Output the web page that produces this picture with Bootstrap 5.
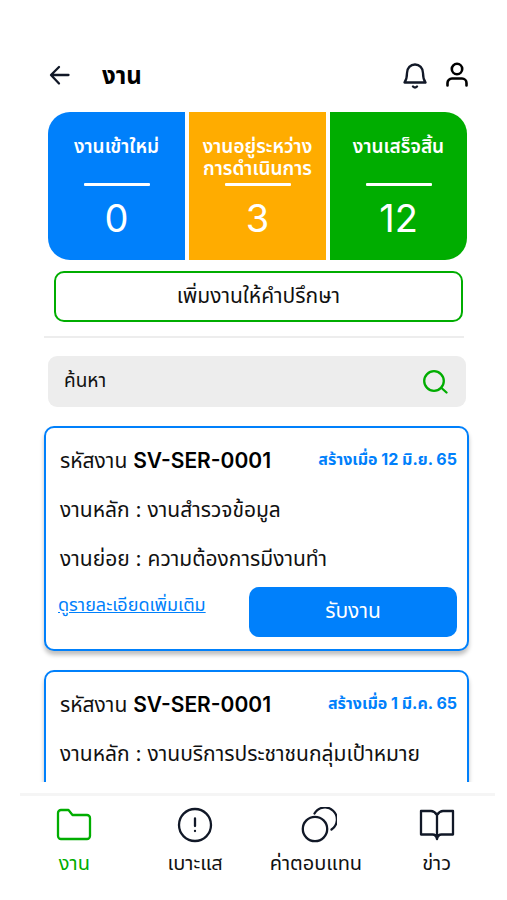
<!DOCTYPE html>
<html lang="th">
<head>
<meta charset="utf-8">
<meta name="viewport" content="width=device-width, initial-scale=1">
<title>งาน</title>
<link href="https://cdn.jsdelivr.net/npm/bootstrap@5.3.0/dist/css/bootstrap.min.css" rel="stylesheet">
<style>
:root{--app-blue:#0080fb;--app-green:#00ad00;--app-amber:#ffac00;--ink:#111827}
body{font-family:Inter,"Noto Sans Thai","Noto Sans",sans-serif;font-size:21px;line-height:28px;color:#111;background:#fff}
svg{display:block;fill:none;stroke:currentColor;stroke-width:2.3;stroke-linecap:round;stroke-linejoin:round}
.app-header{padding:56px 36px 16px 46px;min-height:112px}
.app-header h1{font-size:24px;line-height:40px;font-weight:700;color:#000}
.icon-btn{background:none;border:0;padding:0;color:var(--ink)}
.icon-btn.find{color:var(--app-green)}
.jobs{padding:0 38px 0 44px}
.tiles{gap:4px;margin:0 2px 0 4px;border-radius:22px;overflow:hidden}
.tile{flex:1 1 0;min-height:148px;padding-top:24px;color:#fff}
.tile-new{background:var(--app-blue)}
.tile-doing{background:var(--app-amber)}
.tile-done{background:var(--app-green)}
.tile-label{font-size:19px;line-height:22px;min-height:47px;font-weight:600;white-space:nowrap}
.tile-rule{width:66px;height:3px;border-radius:1px;background:#fff}
.tile-number{font-size:38px;line-height:44px;margin-top:10px}
.btn-add{height:51px;margin:11px 6px 0 10px;padding:0 0 2px;font-size:21px;border:2px solid var(--app-green);border-radius:10px;background:#fff;color:#111}
.split{height:2px;background:#ededed;margin:14px 5px 18px 0}
.search{height:51px;margin:0 3px 19px 4px;padding:0 18px 0 16px;border-radius:9px;background:#ededed}
.search input{font-size:19px;line-height:28px;margin-bottom:2px;background:transparent;border:0;outline:0;min-width:0;color:#111}
.search input::placeholder{color:#111;opacity:1}
.job{min-height:225px;margin-bottom:19px;padding:19px 10px 12px 14px;border:2px solid var(--app-blue);border-radius:10px;background:#fff;box-shadow:0 4px 4px rgba(0,0,0,.25)}
.job-line{margin-bottom:21px}
.job-code{font-weight:600;color:#000}
.job-date{font-size:16px;line-height:24px;font-weight:700;color:var(--app-blue)}
.job-actions{margin:14px 0 0 -2px}
.job-more{font-size:18px;line-height:24px;margin-top:6px;color:var(--app-blue)}
.btn-take{width:208px;height:50px;padding:0 0 2px;font-size:21px;border:0;border-radius:10px;background:var(--app-blue);color:#fff}
.tabs-rule{height:3px;margin:11px 12px 0 20px;background:#f5f5f5}
.tabs{padding:11px 10px 23px 14px}
.tabs a{flex:1 1 0;color:#111;font-size:20px;line-height:28px}
.tabs svg{color:var(--ink);margin-bottom:6px}
.tabs a.current,.tabs a.current svg{color:var(--app-green)}
</style>
<script src="https://cdn.jsdelivr.net/npm/bootstrap@5.3.0/dist/js/bootstrap.bundle.min.js" defer></script>
</head>
<body>
<div class="d-flex flex-column vh-100">
  <header class="app-header d-flex align-items-center">
    <button class="icon-btn" type="button" aria-label="ย้อนกลับ"><svg width="28" height="28" viewBox="0 0 28 28"><path d="M22.500 13H5.500M13 5 5 13l8 8.500"/></svg></button>
    <h1 class="mb-0 ms-4 ps-1 me-auto">งาน</h1>
    <button class="icon-btn me-3" type="button" aria-label="การแจ้งเตือน"><svg width="26" height="28" viewBox="0 0 26 28"><path d="M3.500 20.500C6 17 6 15 6 11C6 6 9.500 2.500 14 2.500S22 6 22 11c0 4 0 6 2.500 9.500zM12 24.500c1.300 1.300 2.700 1.300 4 0"/></svg></button>
    <button class="icon-btn text-black" type="button" aria-label="บัญชีผู้ใช้"><svg width="28" height="28" viewBox="0 0 28 28"><g stroke-width="2.600"><circle cx="14" cy="7" r="5.200"/><path d="M4.500 23.500v-2.500a4.500 4.500 0 0 1 4.500-4.500h10a4.500 4.500 0 0 1 4.500 4.500v2.500"/></g></svg></button>
  </header>

  <main class="jobs flex-fill overflow-hidden">
    <section class="tiles d-flex text-center">
      <div class="tile tile-new"><div class="tile-label">งานเข้าใหม่</div><div class="tile-rule mx-auto"></div><div class="tile-number">0</div></div>
      <div class="tile tile-doing"><div class="tile-label">งานอยู่ระหว่าง<br>การดำเนินการ</div><div class="tile-rule mx-auto"></div><div class="tile-number">3</div></div>
      <div class="tile tile-done"><div class="tile-label">งานเสร็จสิ้น</div><div class="tile-rule mx-auto"></div><div class="tile-number">12</div></div>
    </section>
    <div class="d-flex"><button class="btn btn-add flex-fill" type="button">เพิ่มงานให้คำปรึกษา</button></div>
    <div class="split"></div>
    <form class="search d-flex align-items-center" role="search">
      <input class="flex-fill p-0" type="text" placeholder="ค้นหา" aria-label="ค้นหา">
      <button class="icon-btn find" type="button" aria-label="ค้นหางาน"><svg width="26" height="26" viewBox="0 0 26 26"><circle cx="12" cy="12" r="9.800"/><path d="m19.500 19 5 4.500"/></svg></button>
    </form>

    <article class="job">
      <div class="job-line d-flex justify-content-between"><div>รหัสงาน <span class="job-code">SV-SER-0001</span></div><div class="job-date">สร้างเมื่อ 12 มิ.ย. 65</div></div>
      <div class="job-line">งานหลัก : งานสำรวจข้อมูล</div>
      <div>งานย่อย : ความต้องการมีงานทำ</div>
      <div class="job-actions d-flex justify-content-between align-items-start"><a class="job-more" href="#">ดูรายละเอียดเพิ่มเติม</a><button class="btn btn-take" type="button">รับงาน</button></div>
    </article>
    <article class="job">
      <div class="job-line d-flex justify-content-between"><div>รหัสงาน <span class="job-code">SV-SER-0001</span></div><div class="job-date">สร้างเมื่อ 1 มี.ค. 65</div></div>
      <div class="job-line">งานหลัก : งานบริการประชาชนกลุ่มเป้าหมาย</div>
    </article>
  </main>

  <div class="tabs-rule"></div>
  <nav class="tabs d-flex text-center">
    <a class="current text-decoration-none" href="#" aria-current="page"><svg class="mx-auto" width="36" height="36" viewBox="0 0 36 36"><path d="M2 6A3 3 0 0 1 5 3H12.500l4 5h14.500A3 3 0 0 1 34 11v18a3 3 0 0 1-3 3h-26A3 3 0 0 1 2 29z"/></svg>งาน</a>
    <a class="text-decoration-none" href="#"><svg class="mx-auto" width="36" height="36" viewBox="0 0 36 36"><circle cx="18" cy="18" r="16"/><path d="M18 11.500v7.500M18 24v.100"/></svg>เบาะแส</a>
    <a class="text-decoration-none" href="#"><svg class="mx-auto" width="42" height="36" viewBox="0 0 42 36"><circle cx="20" cy="22" r="12.200"/><path d="M19.500 6.500A12 12 0 1 1 36.500 22.500"/></svg>ค่าตอบแทน</a>
    <a class="text-decoration-none" href="#"><svg class="mx-auto" width="36" height="36" viewBox="0 0 36 36"><path d="M18 32V8c-2-3-3.500-4-6-4H2V27.500h11.500c2.500 0 4 1.500 4.500 4.500 .500-3 2-4.500 4.500-4.500H34V4h-10c-2.500 0-4 1-6 4"/></svg>ข่าว</a>
  </nav>
</div>
</body>
</html>
